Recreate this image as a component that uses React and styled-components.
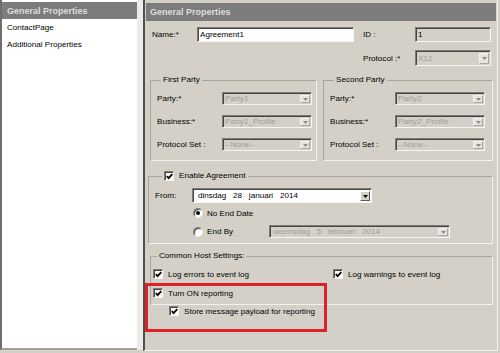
import React from 'react';
import styled, { createGlobalStyle } from 'styled-components';

const GlobalStyle = createGlobalStyle`
  html, body {
    margin: 0;
    padding: 0;
    background: #d4d0c8;
  }
  body {
    font-family: "Liberation Sans", Arial, sans-serif;
    font-size: 8.1px;
    color: #000;
  }
`;

const Window = styled.div`
  display: flex;
  width: 500px;
  height: 353px;
  overflow: hidden;
  background: #d4d0c8;
`;

const Sidebar = styled.div`
  display: flex;
  flex-direction: column;
  box-sizing: border-box;
  width: 137px;
  height: 350px;
  padding-top: 2px;
  border-left: 2px solid #6e6e6e;
  border-bottom: 2px solid #a2a09b;
  background: #fff;
`;

const PaneHeader = styled.div`
  display: flex;
  align-items: center;
  height: ${p => p.$h}px;
  margin: ${p => p.$m};
  padding-left: ${p => p.$pl}px;
  background: #7c7c7c;
  color: #dedede;
  font-size: 9px;
  font-weight: bold;
  white-space: nowrap;
`;

const SidebarItem = styled.div`
  height: 17px;
  line-height: 17px;
  padding-left: 5px;
`;

const Splitter = styled.div`
  width: 6px;
  height: 350px;
  background: #ecebe6;
`;

const Content = styled.div`
  display: flex;
  flex-direction: column;
  box-sizing: border-box;
  width: 355px;
  height: 351px;
  padding-top: 3px;
  border-left: 2px solid #4f4f4f;
  border-right: 1px solid #f3f2ee;
  border-bottom: 1px solid #f3f2ee;
  background: #d4d0c8;
`;

const Form = styled.div`
  display: flex;
  flex-direction: column;
  padding: 0 4px 0 5px;
`;

const TopGrid = styled.div`
  display: grid;
  grid-template-columns: 45px 166px 52px 76px;
  grid-template-rows: 15px 16px;
  row-gap: 8px;
  align-items: center;
  margin: 6px 0 0 2px;
`;

const Label = styled.span`
  grid-column: ${p => p.$col || 'auto'};
  white-space: nowrap;
`;

const Field = styled.div`
  grid-column: ${p => p.$col || 'auto'};
  display: flex;
  align-items: center;
  box-sizing: border-box;
  width: ${p => p.$w}px;
  height: ${p => p.$h}px;
  padding-left: ${p => (p.$pl === undefined ? 2 : p.$pl)}px;
  border: 1px solid;
  border-color: #7e7c77 #f6f5f2 #f6f5f2 #7e7c77;
  box-shadow: inset 1px 1px 0 #454545;
  background: ${p => (p.$white ? '#fff' : '#d4d0c8')};
  color: ${p => (p.$dim ? '#a09d96' : '#000')};
  white-space: pre;
  overflow: hidden;
`;

const FieldText = styled.span`
  flex: 1;
  overflow: hidden;
`;

const DropButton = styled.span`
  display: flex;
  align-items: center;
  justify-content: center;
  box-sizing: border-box;
  width: 10px;
  height: calc(100% - 3px);
  margin: 1px 1px 0 0;
  border: 1px solid;
  border-color: ${p => (p.$dim ? '#f4f3f0 #a9a6a0 #a9a6a0 #f4f3f0' : '#fff #5e5c58 #5e5c58 #fff')};
  background: ${p => (p.$dim ? '#e6e4df' : '#d4d0c8')};
`;

const GroupRow = styled.div`
  display: grid;
  grid-template-columns: 167px 1fr;
  column-gap: 6px;
  margin-top: 9px;
`;

const GroupBox = styled.fieldset`
  margin: ${p => p.$m || 0};
  padding: ${p => p.$pad};
  min-width: 0;
  border: 1px solid #aaa69e;
  border-right-color: #f2f1ed;
  border-bottom-color: #f2f1ed;
`;

const Legend = styled.legend`
  display: flex;
  align-items: center;
  gap: 5px;
  height: 10px;
  margin-left: ${p => p.$ml || 4}px;
  padding: 0 2px;
  line-height: 10px;
  white-space: nowrap;
`;

const PartyGrid = styled.div`
  display: grid;
  grid-template-columns: 65px 90px;
  grid-auto-rows: 13px;
  row-gap: 10px;
  align-items: center;
`;

const DateRow = styled.div`
  display: flex;
  align-items: center;
  height: ${p => p.$h}px;
  margin-top: ${p => p.$mt || 0}px;
  padding-left: ${p => p.$indent || 0}px;
`;

const RowLabel = styled.span`
  width: ${p => p.$w}px;
  flex: none;
  white-space: nowrap;
`;

const RadioText = styled.span`
  width: ${p => (p.$w ? `${p.$w}px` : 'auto')};
  margin-left: 4px;
  white-space: nowrap;
`;

const RadioDot = styled.span`
  position: relative;
  flex: none;
  box-sizing: border-box;
  width: 10px;
  height: 10px;
  border-radius: 50%;
  border: 1px solid;
  border-color: #7e7c77 #e9e8e4 #e9e8e4 #7e7c77;
  background: #fff;
  box-shadow: inset 1px 1px 0 #4a4a4a;

  &::after {
    content: '';
    display: ${p => (p.$on ? 'block' : 'none')};
    position: absolute;
    left: 2px;
    top: 2px;
    width: 4px;
    height: 4px;
    border-radius: 50%;
    background: #000;
  }
`;

const CheckBox = styled.span`
  display: flex;
  align-items: center;
  justify-content: center;
  flex: none;
  box-sizing: border-box;
  width: 10px;
  height: 10px;
  border: 1px solid;
  border-color: #7e7c77 #f6f5f2 #f6f5f2 #7e7c77;
  box-shadow: inset 1px 1px 0 #454545;
  background: #fff;
`;

const CheckRow = styled.div`
  display: flex;
  align-items: center;
  gap: 5px;
  height: 12px;
  padding-left: ${p => p.$indent || 0}px;
  white-space: nowrap;
`;

const HostGrid = styled.div`
  display: grid;
  grid-template-columns: 180px 1fr;
  grid-auto-rows: 12px;
  row-gap: 8px;
`;

const Highlight = styled.div`
  position: relative;
  grid-column: 1 / -1;
  display: flex;
  flex-direction: column;
  gap: 8px;

  &::after {
    content: '';
    position: absolute;
    left: -8px;
    top: -5px;
    width: 182px;
    height: 49px;
    box-sizing: border-box;
    border: 3px solid #df1f2b;
    pointer-events: none;
  }
`;

const Arrow = ({ dim }) => (
  <svg width="5" height="3" viewBox="0 0 5 3">
    <path d="M0 0H5L2.5 3Z" fill={dim ? '#8e8b85' : '#000'} />
  </svg>
);

const Combo = ({ children, dim, ...rest }) => (
  <Field $dim={dim} {...rest}>
    <FieldText>{children}</FieldText>
    <DropButton $dim={dim}>
      <Arrow dim={dim} />
    </DropButton>
  </Field>
);

const Check = () => (
  <CheckBox>
    <svg width="7" height="7" viewBox="0 0 7 7">
      <path d="M0.8 3.2L2.6 5.2L6.3 1.2" fill="none" stroke="#000" strokeWidth="1.8" />
    </svg>
  </CheckBox>
);

const PartyGroup = ({ title, party, profile }) => (
  <GroupBox $pad="7px 4px 9px 6px">
    <Legend>{title}</Legend>
    <PartyGrid>
      <Label>Party:*</Label>
      <Combo dim $w={90} $h={13}>{party}</Combo>
      <Label>Business:*</Label>
      <Combo dim $w={90} $h={13}>{profile}</Combo>
      <Label>Protocol Set :</Label>
      <Combo dim $w={90} $h={13}>--None--</Combo>
    </PartyGrid>
  </GroupBox>
);

export default function App() {
  return (
    <Window>
      <GlobalStyle />
      <Sidebar>
        <PaneHeader $h={17} $pl={5}>General Properties</PaneHeader>
        <SidebarItem>ContactPage</SidebarItem>
        <SidebarItem>Additional Properties</SidebarItem>
      </Sidebar>
      <Splitter />
      <Content>
        <PaneHeader $h={18} $pl={4} $m="0 1px">General Properties</PaneHeader>
        <Form>
          <TopGrid>
            <Label>Name:*</Label>
            <Field $white $w={157} $h={15}>Agreement1</Field>
            <Label>ID :</Label>
            <Field $w={76} $h={15}>1</Field>
            <Label $col="3">Protocol :*</Label>
            <Combo dim $col="4" $w={76} $h={16}>X12</Combo>
          </TopGrid>

          <GroupRow>
            <PartyGroup title="First Party" party="Party1" profile="Party1_Profile" />
            <PartyGroup title="Second Party" party="Party2" profile="Party2_Profile" />
          </GroupRow>

          <GroupBox $m="10px 0 0 -2px" $pad="7px 4px 5px 6px">
            <Legend $ml={7}>
              <Check />
              Enable Agreement
            </Legend>
            <DateRow $h={15}>
              <RowLabel $w={37}>From:</RowLabel>
              <Field $white $w={180} $h={15} $pl={5}>
                <FieldText>{'dinsdag   28   januari   2014'}</FieldText>
                <DropButton>
                  <Arrow />
                </DropButton>
              </Field>
            </DateRow>
            <DateRow $h={12} $mt={4} $indent={38}>
              <RadioDot $on />
              <RadioText>No End Date</RadioText>
            </DateRow>
            <DateRow $h={13} $mt={6} $indent={38}>
              <RadioDot />
              <RadioText $w={62}>End By</RadioText>
              <Combo dim $w={181} $h={13} $pl={3}>{'woensdag   5   februari   2014'}</Combo>
            </DateRow>
          </GroupBox>

          <GroupBox $m="7px 0 0" $pad="7px 4px 4px 2px">
            <Legend>Common Host Settings:</Legend>
            <HostGrid>
              <CheckRow>
                <Check />
                Log errors to event log
              </CheckRow>
              <CheckRow>
                <Check />
                Log warnings to event log
              </CheckRow>
              <Highlight>
                <CheckRow>
                  <Check />
                  Turn ON reporting
                </CheckRow>
                <CheckRow $indent={16}>
                  <Check />
                  Store message payload for reporting
                </CheckRow>
              </Highlight>
            </HostGrid>
          </GroupBox>
        </Form>
      </Content>
    </Window>
  );
}
